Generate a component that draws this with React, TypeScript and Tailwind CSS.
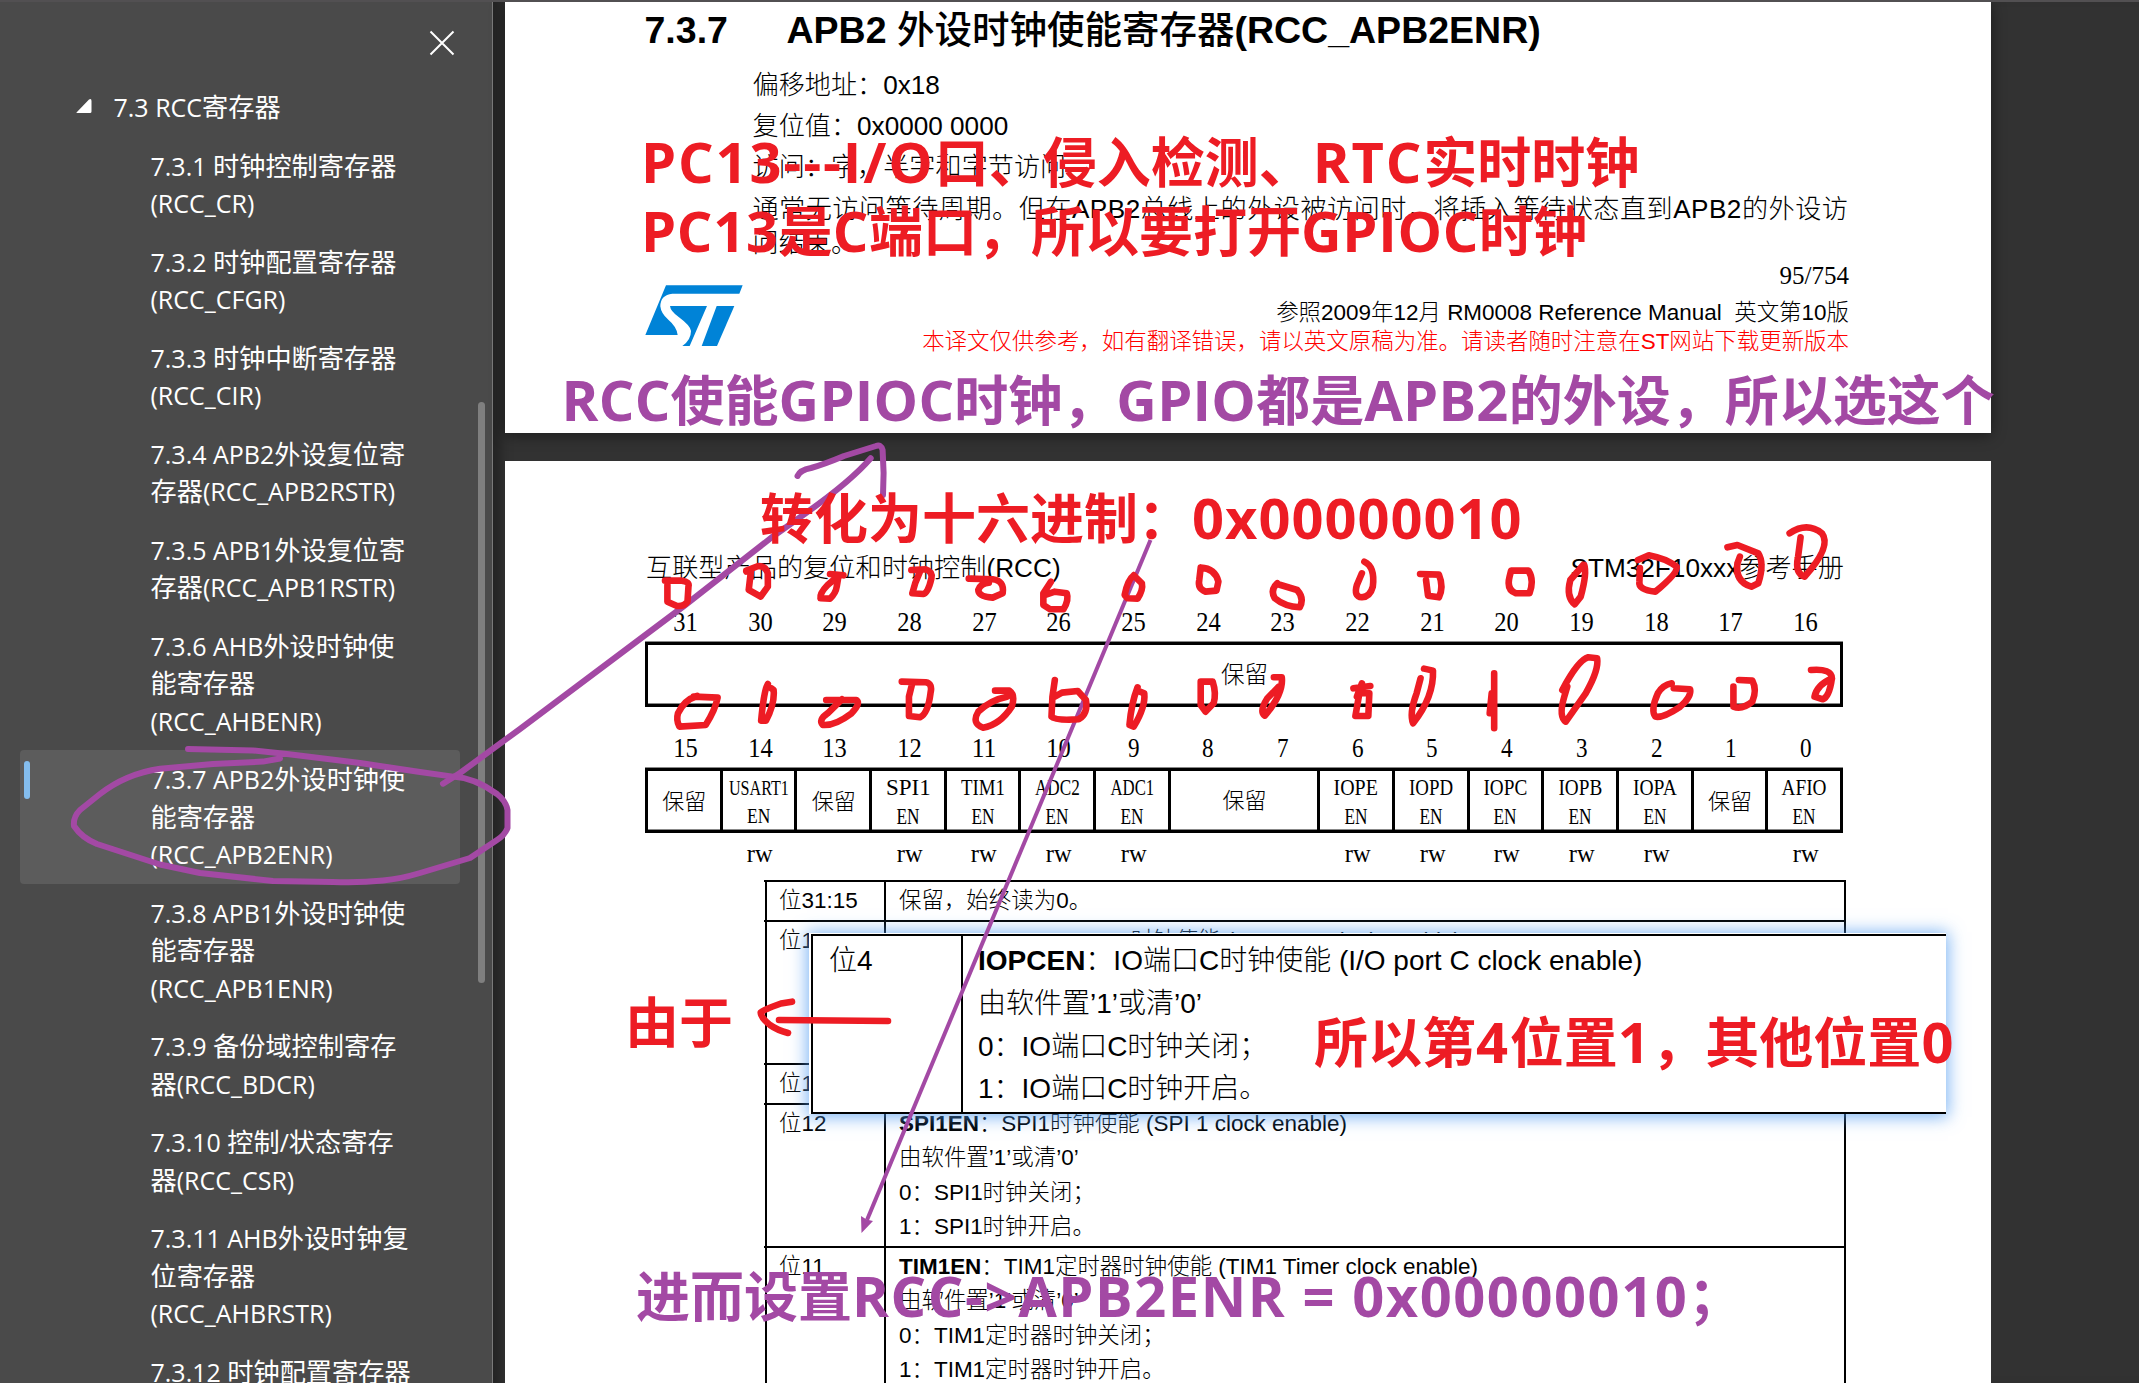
import { useLayoutEffect, useRef, useState } from "react";
import type { ReactNode } from "react";

const RUNS = /([\x20-\x7e]+)/;

/** Splits a string into latin and CJK runs so that each can have its own size. */
function Mixed({ text, latin }: { text: string; latin: string }) {
  return (
    <>
      {text.split(RUNS).map((run, i) =>
        run === "" ? null : i % 2 === 1 ? (
          <span key={i} className={latin}>
            {run}
          </span>
        ) : (
          <span key={i}>{run}</span>
        ),
      )}
    </>
  );
}

/** Bold marker text; tracking of the latin runs is adjusted to fill `width`. */
function Marker({ text, width, className }: { text: string; width: number; className: string }) {
  const ref = useRef<HTMLSpanElement>(null);
  const [track, setTrack] = useState(0);
  useLayoutEffect(() => {
    const el = ref.current;
    if (!el) return;
    const count = text.replace(/[^\x20-\x7e]/g, "").length;
    if (count > 0) setTrack((width - el.offsetWidth) / count);
  }, [text, width]);
  return (
    <div
      className={
        "absolute whitespace-pre font-['Open_Sans','Noto_Sans_CJK_SC',sans-serif] text-[54px] leading-[70px] font-bold " +
        className
      }
    >
      <span ref={ref} className="inline-block">
        {text.split(RUNS).map((run, i) =>
          i % 2 === 1 ? (
            <span key={i} className="text-[56px]" style={{ letterSpacing: track }}>
              {run}
            </span>
          ) : (
            <span key={i}>{run}</span>
          ),
        )}
      </span>
    </div>
  );
}

/** Condenses a serif label horizontally to the given width. */
function Narrow({ text, width, className = "" }: { text: string; width: number; className?: string }) {
  const ref = useRef<HTMLSpanElement>(null);
  const [scale, setScale] = useState(1);
  useLayoutEffect(() => {
    if (ref.current) setScale(width / ref.current.offsetWidth);
  }, [width]);
  return (
    <span
      ref={ref}
      className={"inline-block whitespace-nowrap font-['Liberation_Serif',serif] " + className}
      style={{ transform: `scaleX(${scale})` }}
    >
      {text}
    </span>
  );
}

const OUTLINE: string[][] = [
  ["7.3.1 时钟控制寄存器", "(RCC_CR)"],
  ["7.3.2 时钟配置寄存器", "(RCC_CFGR)"],
  ["7.3.3 时钟中断寄存器", "(RCC_CIR)"],
  ["7.3.4 APB2外设复位寄", "存器(RCC_APB2RSTR)"],
  ["7.3.5 APB1外设复位寄", "存器(RCC_APB1RSTR)"],
  ["7.3.6 AHB外设时钟使", "能寄存器", "(RCC_AHBENR)"],
  ["7.3.7 APB2外设时钟使", "能寄存器", "(RCC_APB2ENR)"],
  ["7.3.8 APB1外设时钟使", "能寄存器", "(RCC_APB1ENR)"],
  ["7.3.9 备份域控制寄存", "器(RCC_BDCR)"],
  ["7.3.10 控制/状态寄存", "器(RCC_CSR)"],
  ["7.3.11 AHB外设时钟复", "位寄存器", "(RCC_AHBRSTR)"],
  ["7.3.12 时钟配置寄存器"],
];
const ACTIVE = 6;

function Sidebar() {
  return (
    <aside className="relative flex h-full w-[493px] shrink-0 flex-col overflow-hidden border-r border-[#7a7a7a] bg-[#4a4a4a] font-['Open_Sans','Noto_Sans_CJK_SC',sans-serif] text-[26.2px] text-white">
      <div className="flex h-[78px] shrink-0 items-start justify-end pt-[20px] pr-[37px]">
        <svg viewBox="0 0 26 26" className="mt-[10px] h-[26px] w-[26px]" fill="none" stroke="white" strokeWidth="2">
          <path d="M1.5 1.5 24.5 24.5M24.5 1.5 1.5 24.5" />
        </svg>
      </div>
      <div className="flex h-[58.5px] shrink-0 items-start pt-[11px] leading-[37.4px]">
        <svg viewBox="0 0 16 16" className="mt-[9px] ml-[76px] h-4 w-4" fill="white">
          <path d="M0.5 14.5 13 1.5Q15.5 0 15.5 3V13.5Q15.5 15 14 15H1.5Q0 15 .5 14.5Z" />
        </svg>
        <span className="ml-[21.5px]">
          <Mixed text="7.3 RCC寄存器" latin="text-[25px]" />
        </span>
      </div>
      <ul>
        {OUTLINE.map((lines, i) => (
          <li
            key={lines[0]}
            className={
              "relative mr-[32px] ml-[20px] rounded-[4px] pt-[11px] pb-[10.3px] pl-[130.5px] leading-[37.4px] whitespace-nowrap " +
              (i === ACTIVE ? "bg-[#5c5c5c]" : "")
            }
          >
            {i === ACTIVE && <span className="absolute top-[11px] left-1 h-[38px] w-[6px] rounded-[3px] bg-[#84bdee]" />}
            {lines.map((line) => (
              <div key={line} className="h-[37.4px]">
                <Mixed text={line} latin="text-[25px]" />
              </div>
            ))}
          </li>
        ))}
      </ul>
      <span className="absolute top-[402px] right-[7px] h-[581px] w-[7px] rounded-full bg-[#7f7f7f]" />
    </aside>
  );
}

function StLogo() {
  return (
    <svg viewBox="0 0 360 252" className="h-[84px] w-[120px]" fill="#0083d7">
      <path d="M93 31H323L313 56H112Q76 60 76 94Q78 116 100 134Q126 156 128 180H31Z" />
      <path d="M105 93H216L164 213H142Q168 195 168 168Q166 152 132 127Q106 108 105 93Z" />
      <path d="M245 93H298L246 213H200Z" />
    </svg>
  );
}

function PageOne() {
  return (
    <section className="relative h-[431px] w-[1486px] shrink-0 bg-white pt-[3px] shadow-[0_2px_14px_rgba(0,0,0,0.45)]">
      <h1 className="flex pl-[139.5px] text-[37.5px] leading-[50px] font-bold whitespace-nowrap">
        <span className="w-[142px]">7.3.7</span>
        <span>
          APB2 <span className="font-medium">外设时钟使能寄存器</span>(RCC_APB2ENR)
        </span>
      </h1>
      <div className="mt-[9.5px] pl-[247.5px] text-[26.15px] leading-[41.4px] font-light whitespace-nowrap">
        <p>偏移地址：0x18</p>
        <p>复位值：0x0000 0000</p>
        <p>访问：字，半字和字节访问</p>
        <p className="tracking-[0.48px]">通常无访问等待周期。但在APB2总线上的外设被访问时，将插入等待状态直到APB2的外设访</p>
        <p className="leading-[27px]">问结束。</p>
      </div>
      <footer className="-mt-[2.8px] flex justify-between pr-[142px] pl-[130px] text-[22.46px] leading-[29px] font-light">
        <div className="pt-[21px]">
          <StLogo />
        </div>
        <div className="text-right whitespace-pre">
          <p className="font-['Liberation_Serif',serif] text-[25px] leading-[44px]">95/754</p>
          <p>{"参照2009年12月 RM0008 Reference Manual  英文第10版"}</p>
          <p className="text-[#ff0000]">本译文仅供参考，如有翻译错误，请以英文原稿为准。请读者随时注意在ST网站下载更新版本</p>
        </div>
      </footer>
    </section>
  );
}

type Field = { span?: number; label: string; width?: number; small?: boolean };
const FIELDS: Field[] = [
  { label: "保留" },
  { label: "USART1", width: 60, small: true },
  { label: "保留" },
  { label: "SPI1", width: 45 },
  { label: "TIM1", width: 44 },
  { label: "ADC2", width: 45 },
  { label: "ADC1", width: 44 },
  { label: "保留", span: 2 },
  { label: "IOPE", width: 44 },
  { label: "IOPD", width: 44 },
  { label: "IOPC", width: 44 },
  { label: "IOPB", width: 44 },
  { label: "IOPA", width: 44 },
  { label: "保留" },
  { label: "AFIO", width: 45 },
];

function BitNumbers({ from }: { from: number }) {
  return (
    <div className="grid w-[1198px] grid-cols-16 pl-[3px] text-center text-[27px] leading-10">
      {Array.from({ length: 16 }, (_, i) => {
        const n = from - i;
        return (
          <span key={n}>
            <Narrow text={String(n)} width={n > 9 ? 24.5 : 12} />
          </span>
        );
      })}
    </div>
  );
}

function RegisterMap() {
  return (
    <div className="pl-[140px] text-black">
      <div className="mt-[14px]">
        <BitNumbers from={31} />
      </div>
      <div className="flex h-[65px] w-[1198px] items-center justify-center border-[3px] border-black pt-[2px] pl-px text-[23.5px] font-light shadow-[0_-1px_0_#888,inset_0_-1px_0_#888]">
        保留
      </div>
      <div className="mt-[21px]">
        <BitNumbers from={15} />
      </div>
      <div className="h-[65px] w-[1198px] border-y-[3px] border-r-[3px] border-black shadow-[0_-1px_0_#888,inset_0_-1px_0_#888]">
        <div className="grid h-full w-[1195px] grid-cols-16">
          {FIELDS.map((f, i) => (
            <div
              key={i}
              className={
                "flex flex-col items-center border-l-[3px] border-black " +
                (f.span ? "col-span-2 pb-[2px] pl-[2px] " : "") +
                (f.width ? "pt-[2px] leading-[29px] " : "justify-center pl-px text-[22px] font-light ") +
                (f.small ? "text-[22px]" : f.width ? "text-[24px]" : "")
              }
            >
              {f.width ? (
                <>
                  <Narrow text={f.label} width={f.width} />
                  <Narrow text="EN" width={23} className={f.small ? "-mt-[1px]" : ""} />
                </>
              ) : (
                f.label
              )}
            </div>
          ))}
        </div>
      </div>
      <div className="grid w-[1198px] grid-cols-16 pl-[3px] text-center text-[26px] leading-10">
        {FIELDS.map((f, i) => (
          <span key={i} className={f.span ? "col-span-2" : ""}>
            {f.width && <Narrow text="rw" width={25.5} />}
          </span>
        ))}
      </div>
    </div>
  );
}

function BitRow({ bits, height, children }: { bits: string; height: string; children: ReactNode }) {
  return (
    <div className={"relative flex border-t-2 border-black " + height}>
      <span className="absolute -top-[2px] -left-[3px] h-[2px] w-[3px] bg-black" />
      <div className="w-[117px] pt-[2px] pl-3">{bits}</div>
      <div className="flex-1 border-l-2 border-black pt-[2px] pl-[13px]">{children}</div>
    </div>
  );
}

function BitTable() {
  return (
    <div className="mt-[6px] ml-[260px] w-[1081px] border-x-2 border-black text-[22.46px] leading-[34.4px] font-light whitespace-nowrap">
      <BitRow bits="位31:15" height="h-[40px]">
        保留，始终读为0。
      </BitRow>
      <BitRow bits="位14" height="h-[143px]">
        <p>
          <b className="font-bold">USART1EN</b>：USART1时钟使能 (USART1 clock enable)
        </p>
      </BitRow>
      <BitRow bits="位13" height="h-[40px]">
        保留，始终读为0。
      </BitRow>
      <BitRow bits="位12" height="h-[143px]">
        <p>
          <b className="font-bold">SPI1EN</b>：SPI1时钟使能 (SPI 1 clock enable)
        </p>
        <p>由软件置’1’或清’0’</p>
        <p>0：SPI1时钟关闭；</p>
        <p>1：SPI1时钟开启。</p>
      </BitRow>
      <BitRow bits="位11" height="h-[143px]">
        <p>
          <b className="font-bold">TIM1EN</b>：TIM1定时器时钟使能 (TIM1 Timer clock enable)
        </p>
        <p>由软件置’1’或清’0’</p>
        <p>0：TIM1定时器时钟关闭；</p>
        <p>1：TIM1定时器时钟开启。</p>
      </BitRow>
    </div>
  );
}

function PageTwo() {
  return (
    <section className="relative mt-[28px] h-[922px] w-[1486px] shrink-0 overflow-hidden bg-white pt-[87px]">
      <header className="flex justify-between pr-[147px] pl-[141px] text-[26.2px] leading-10 font-light">
        <span>互联型产品的复位和时钟控制(RCC)</span>
        <span>STM32F10xxx参考手册</span>
      </header>
      <RegisterMap />
      <BitTable />
    </section>
  );
}

/** Enlarged snippet for bit 4, pasted over the table. */
function Snippet() {
  return (
    <div className="absolute top-[933px] left-[809px] h-[181px] w-[1137px] bg-white pt-px pl-[2px] text-[28px] leading-[42.8px] font-light whitespace-nowrap shadow-[0_1px_16px_2px_rgba(80,155,240,0.75)]">
      <div className="flex h-[180px] border-y-2 border-l-2 border-black">
        <div className="w-[148px] pt-[4px] pl-4">位4</div>
        <div className="border-l-2 border-black pt-[4px] pl-[15px]">
          <p>
            <b className="font-bold">IOPCEN</b>：IO端口C时钟使能 (I/O port C clock enable)
          </p>
          <p>由软件置’1’或清’0’</p>
          <p>0：IO端口C时钟关闭；</p>
          <p>1：IO端口C时钟开启。</p>
        </div>
      </div>
    </div>
  );
}

const LEFT_STROKES = [
  "M345 452 L380 452 Q397 455 394 470 L392 515 Q385 530 370 528 L350 515 L350 465",
  "M515 425 L525 418 L520 480 L545 500 L560 470 L560 430 Q555 408 540 408 L515 422",
  "M690 432 L718 436 M705 440 L685 465 Q668 490 670 505 L690 506 Q702 490 704 470 L708 436",
  "M860 420 L890 418 Q905 425 902 445 Q895 490 885 492 L862 490 L868 460 L878 425",
  "M980 446 L1030 448 Q1055 452 1051 490 L1030 503 Q1000 500 1000 480 Q1005 460 1022 458",
  "M1152 455 L1136 490 L1136 525 L1150 538 L1178 538 Q1190 510 1185 490 L1160 485 L1140 495",
  "M1325 436 Q1312 450 1306 495 L1312 505 L1333 506 Q1345 480 1342 460 L1325 436",
  "M1465 413 Q1495 415 1502 455 L1498 482 L1475 485 Q1458 475 1462 450 L1465 413",
  "M405 800 L455 803 Q450 840 430 885 L375 890 Q368 870 372 850 Q385 810 412 798",
  "M560 762 Q552 780 546 872 L556 872 Q575 820 572 780 L567 775",
  "M682 810 L745 810 Q755 820 735 850 Q700 888 675 885 Q665 870 685 850 L715 808",
  "M840 755 L890 757 Q905 760 900 790 Q895 850 878 862 L855 858 L855 800 L862 760",
  "M1035 782 L1065 782 Q1078 795 1070 830 Q1045 885 1010 893 Q985 880 1000 845 Q1025 810 1060 800",
  "M1160 750 L1155 800 L1153 860 Q1160 872 1210 868 Q1230 850 1225 810 L1208 783 L1175 788 L1160 800",
  "M1333 772 Q1320 820 1316 885 L1325 890 Q1350 830 1347 790 L1338 785",
  "M1465 755 L1490 755 Q1498 790 1492 820 L1475 845 L1465 825 L1465 755",
];

const RIGHT_STROKES = [
  "M75 460 Q60 480 70 505 Q90 530 120 532 Q130 505 115 480 L75 462",
  "M250 395 Q272 410 267 470 Q262 500 245 502 Q228 500 235 465 L245 430",
  "M362 432 L400 434 Q410 470 400 502 L378 497 L374 450",
  "M545 422 L580 422 Q592 450 582 490 L555 490 Q535 480 542 440Z",
  "M692 405 Q698 430 685 500 L673 523 Q655 500 664 450 L690 405",
  "M800 390 L822 376 Q855 385 878 410 Q880 430 835 485 Q800 480 803 455 L804 414",
  "M980 352 L1000 345 L1042 370 Q1055 400 1042 460 L1028 470 Q995 455 1000 400 L1005 380",
  "M1105 310 Q1140 275 1170 310 Q1190 350 1135 440 Q1115 430 1122 380 L1127 322",
  "M68 742 L84 742 Q88 790 50 857 Q38 845 55 805 L78 770",
  "M228 775 L262 768 M245 760 L235 800 M260 790 L240 790 L232 858 L258 858 L260 790",
  "M370 716 L388 722 Q390 800 348 880 Q340 850 355 790 L363 745",
  "M511 730 L511 895 M506 790 L502 850",
  "M648 780 Q680 690 700 682 L718 685 Q722 720 695 790 L655 875 Q640 860 652 800 L658 770",
  "M872 775 L905 778 Q908 800 885 830 Q850 865 835 860 Q825 840 840 790 Q850 765 868 760",
  "M1003 750 L1030 752 Q1040 780 1030 815 Q1010 840 992 830 L992 770",
  "M1148 720 Q1190 715 1190 745 Q1185 800 1172 808 L1155 800 Q1160 765 1190 745",
];

/** Freehand pen strokes drawn across the whole document. */
function PenStrokes() {
  return (
    <svg
      viewBox="0 0 2139 1383"
      className="pointer-events-none absolute inset-0 h-[1383px] w-[2139px]"
      fill="none"
      strokeLinecap="round"
      strokeLinejoin="round"
    >
      <g stroke="#a349a4" strokeWidth="6">
        <path d="M188 749 L253 750.5 L287 754 L360 763 L420 772 L453 776.6 Q475 778 497 794 Q506 801 507.500 810 L507.500 828 Q505 835 497 840 L470 858 L420 873 Q400 879 383 880.500 Q360 883 333 882 L273 881 L200 873 L160 864.5 L97 844 Q82 838 74 826 Q73 817 80 810 L100 794 Q113 784 127 778 Q143 771 160 768.7 L213 764 L263 761.6 L280 758.5" />
        <path d="M443 783.7 L460 773 L520 729 L684 606 L772.6 536.7 L806 513 Q850 482 870.7 458.3" />
        <path d="M797.5 476 Q800 470 811 468 Q825 464 844 456 L876 446 Q881 444 882.6 450 L883.6 473 L883 495" />
      </g>
      <path d="M1150.5 540 867 1220" stroke="#a349a4" strokeWidth="4" strokeLinecap="butt" />
      <path d="M861.500 1233 861 1216 866.500 1219.500 873 1221Z" fill="#a349a4" />
      <g stroke="#ed1c24" strokeWidth="6.600">
        <g transform="translate(500 430) scale(0.4783 0.3333)">
          {LEFT_STROKES.map((d) => (
            <path key={d} d={d} vectorEffect="non-scaling-stroke" />
          ))}
        </g>
        <g transform="translate(1240 430) scale(0.4974 0.3333)">
          {RIGHT_STROKES.map((d) => (
            <path key={d} d={d} vectorEffect="non-scaling-stroke" />
          ))}
        </g>
        <path d="M888 1021 779 1020M792 1001.700 781 1003.500 Q763 1010 760.700 1012.500 Q761 1018 770 1025 Q777 1030 788 1033" />
      </g>
    </svg>
  );
}

export default function App() {
  return (
    <div className="relative flex h-[1383px] w-[2139px] overflow-hidden bg-[#323232] font-['Liberation_Sans','Noto_Sans_CJK_SC',sans-serif] text-black">
      <Sidebar />
      <main className="flex flex-1 flex-col pt-[2px] pl-[12px] shadow-[inset_14px_0_14px_-8px_rgba(0,0,0,0.35)]">
        <PageOne />
        <PageTwo />
      </main>
      <div className="absolute inset-x-0 top-0 h-[2px] bg-[#525052]" />
      <Snippet />
      <PenStrokes />
      <Marker text="PC13---I/O口、侵入检测、RTC实时时钟" width={998} className="top-[126px] left-[641px] text-[#ed1c24]" />
      <Marker text="PC13是C端口，所以要打开GPIOC时钟" width={946} className="top-[195px] left-[641px] text-[#ed1c24]" />
      <Marker text="RCC使能GPIOC时钟，GPIO都是APB2的外设，所以选这个" width={1433} className="top-[364px] left-[561.5px] text-[#a349a4]" />
      <Marker text="转化为十六进制：0x00000010" width={763} className="top-[482px] left-[760px] text-[#ed1c24]" />
      <Marker text="由于" width={108} className="top-[987px] left-[625px] text-[#ed1c24]" />
      <Marker text="所以第4位置1，其他位置0" width={641} className="top-[1006px] left-[1314px] text-[#ed1c24]" />
      <Marker text="进而设置RCC->APB2ENR = 0x00000010；" width={1106} className="top-[1260px] left-[636px] text-[#a349a4]" />
    </div>
  );
}
